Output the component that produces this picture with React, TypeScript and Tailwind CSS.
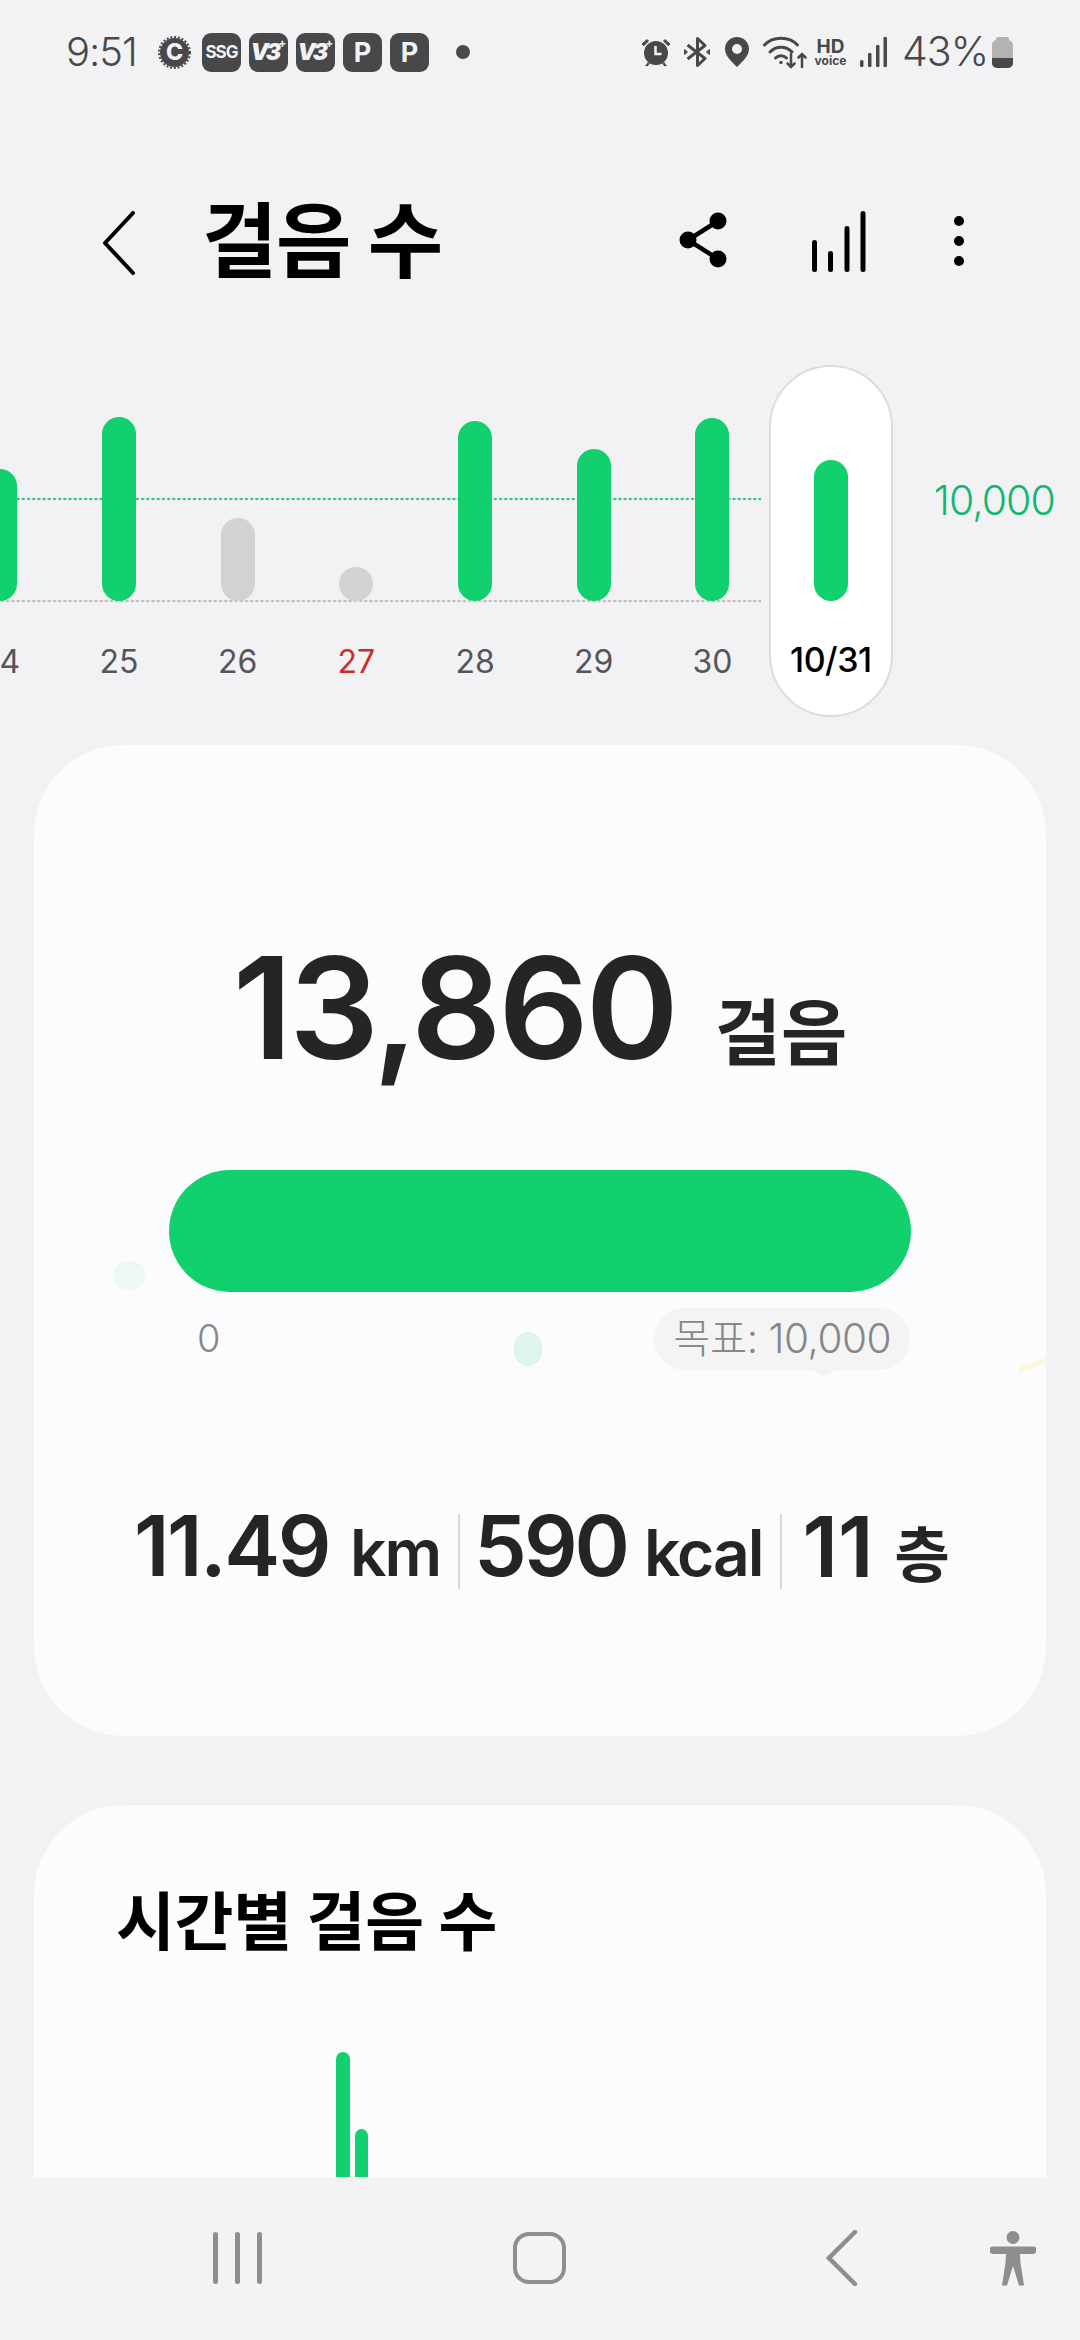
const days = [
  { label: "24", h: 132, color: "bg-[#12d06e]", text: "text-[#55555a]" },
  { label: "25", h: 184, color: "bg-[#12d06e]", text: "text-[#55555a]" },
  { label: "26", h: 83, color: "bg-[#d2d2d2]", text: "text-[#55555a]" },
  { label: "27", h: 34, color: "bg-[#d2d2d2]", text: "text-[#c9302c]" },
  { label: "28", h: 180, color: "bg-[#12d06e]", text: "text-[#55555a]" },
  { label: "29", h: 152, color: "bg-[#12d06e]", text: "text-[#55555a]" },
  { label: "30", h: 183, color: "bg-[#12d06e]", text: "text-[#55555a]" },
];

const Alarm = () => (
  <svg width="30" height="30" viewBox="0 0 30 30" fill="#48484a">
    <circle cx="15" cy="16" r="12" />
    <path d="M1 7 6 2.500 7.500 4 2.800 8.800ZM29 7 24 2.500 22.500 4 27.200 8.800Z" stroke="#48484a" strokeWidth="1" />
    <path d="M4 29l3-4 2 1.500-2.500 2.800ZM26 29l-3-4-2 1.500 2.500 2.800Z" />
    <path d="M14.500 9v8h6" fill="none" stroke="#f2f2f4" strokeWidth="2.500" />
  </svg>
);

const Bluetooth = () => (
  <svg width="26" height="32" viewBox="0 0 26 32" fill="none" stroke="#48484a" strokeWidth="3" strokeLinejoin="round">
    <path d="M3.500 9 21 22.500 13.500 29.500V2.500L21 9.500 3.500 23" />
    <path d="M0.500 13.500v5l3-2.500ZM25.500 13.500v5l-3-2.500Z" fill="#48484a" strokeWidth="1" />
  </svg>
);

const Pin = () => (
  <svg width="24" height="30" viewBox="0 0 24 30">
    <path
      fillRule="evenodd"
      fill="#48484a"
      d="M12 0C5.200 0 0 5.200 0 12c0 7 6.500 12.500 12 18 5.500-5.500 12-11 12-18C24 5.200 18.800 0 12 0Zm0 7a5 5 0 1 1 0 10 5 5 0 0 1 0-10Z"
    />
  </svg>
);

const Wifi = () => (
  <svg width="44" height="33" viewBox="0 0 44 33" fill="none" stroke="#48484a" strokeWidth="3" strokeLinecap="round">
    <path d="M1.500 9C10 0 26 0 34.500 9" />
    <path d="M7 16C13 9.500 23 9.500 29 16" />
    <path d="M12.500 22C15.500 19 20.500 19 23.500 22" />
    <circle cx="18" cy="26.500" r="1.700" fill="#48484a" stroke="none" />
    <path d="M28 18v13M24.500 27.500 28 31l3.500-3.500M39 31V18M35.500 21.500 39 18l3.500 3.500" strokeWidth="2.500" />
  </svg>
);

const Signal = () => (
  <svg width="27" height="30" viewBox="0 0 27 30" fill="#48484a">
    <rect x="0" y="23" width="3.500" height="7" rx="1.500" />
    <rect x="8" y="16" width="3.500" height="14" rx="1" />
    <rect x="16" y="8" width="3.500" height="22" rx="1" />
    <rect x="23.500" y="0" width="3.500" height="30" rx="1" />
  </svg>
);

const ShareIcon = () => (
  <svg width="48" height="56" viewBox="0 0 48 56" fill="#000">
    <path d="M39 9 9 28 39 47" fill="none" stroke="#000" strokeWidth="4.500" />
    <ellipse cx="39" cy="9" rx="8.500" ry="8.500" />
    <ellipse cx="9" cy="28" rx="8.500" ry="8.500" />
    <ellipse cx="39" cy="47" rx="8.500" ry="8.500" />
  </svg>
);

const ChartIcon = () => (
  <svg width="54" height="61" viewBox="0 0 54 61" fill="#000">
    <rect x="0" y="29" width="5" height="32" rx="2.500" />
    <rect x="16" y="40" width="5" height="21" rx="2.500" />
    <rect x="32.500" y="15" width="5" height="46" rx="2.500" />
    <rect x="48.500" y="0" width="5" height="61" rx="2.500" />
  </svg>
);

const Person = () => (
  <svg width="46" height="56" viewBox="0 0 46 56" fill="#8e8e90">
    <ellipse cx="23" cy="6.500" rx="6.500" ry="6.500" />
    <path d="M3 15.500h40a3 3 0 0 1 0 7.500H30l.5 9 3.500 22.500h-5L23 35l-6 19.500h-5L15.500 32l.5-9H3a3 3 0 0 1 0-7.500Z" />
  </svg>
);

function Badge({ children }: { children: React.ReactNode }) {
  return (
    <div className="w-[39px] h-[39px] rounded-[9px] bg-[#48484a] flex items-center justify-center text-[#f2f2f4] font-bold leading-none">
      {children}
    </div>
  );
}

function V3Badge() {
  return (
    <Badge>
      <span className="text-[23px] italic font-black tracking-[-3px]">V3</span>
      <span className="text-[12px] -mt-[18px]">+</span>
    </Badge>
  );
}

function Stat({ value, unit, valueClass, unitClass }: { value: string; unit: string; valueClass: string; unitClass: string }) {
  return (
    <div className="flex items-baseline">
      <span className={`text-[84px] leading-[90px] font-semibold ${valueClass}`}>{value}</span>
      <span className={unitClass}>{unit}</span>
    </div>
  );
}

export default function App() {
  return (
    <div className="w-[1080px] h-[2340px] overflow-hidden flex flex-col bg-[#f2f2f4] font-['Inter','Noto_Sans_CJK_KR',sans-serif]">
      <div className="flex-1 min-h-0 overflow-hidden">
        {/* status bar */}
        <div className="h-[104px] flex items-center pl-[66px] text-[#48484a]">
          <span className="text-[40px] font-light tracking-[-1px] w-[92px]">9:51</span>
          <svg width="33" height="35" viewBox="0 0 33 35" className="mr-[11px]">
            <circle cx="16.500" cy="17.500" r="14.500" fill="#48484a" />
            <circle cx="16.500" cy="17.500" r="15.500" fill="none" stroke="#48484a" strokeWidth="2" strokeDasharray="2 1.800" />
            <text x="16.500" y="25" textAnchor="middle" fontSize="23" fontWeight="800" fill="#f2f2f4">C</text>
          </svg>
          <div className="flex gap-[8px]">
            <Badge><span className="text-[17px] tracking-[-1px]">SSG</span></Badge>
            <V3Badge />
            <V3Badge />
            <Badge><span className="text-[27px]">P</span></Badge>
            <Badge><span className="text-[27px]">P</span></Badge>
          </div>
          <div className="w-[14px] h-[14px] rounded-full bg-[#48484a] ml-[27px] mr-[171px]" />
          <Alarm />
          <div className="ml-[13px]"><Bluetooth /></div>
          <div className="ml-[15px]"><Pin /></div>
          <div className="ml-[14px]"><Wifi /></div>
          <div className="ml-[7px] flex flex-col items-center w-[33px] font-bold">
            <span className="text-[19px] leading-[17px]">HD</span>
            <span className="text-[12px] leading-[11px]">voice</span>
          </div>
          <div className="ml-[13px]"><Signal /></div>
          <span className="ml-[15px] text-[41px] font-light tracking-[-1px] w-[90px]">43%</span>
          <div className="w-[21px] h-[31px] flex flex-col items-center">
            <div className="w-[13px] h-[3px] rounded-t-[2px] bg-[#b3b3b5]" />
            <div className="w-[21px] h-[28px] rounded-[5px] bg-[#b3b3b5] overflow-hidden flex flex-col justify-end">
              <div className="h-[10px] bg-[#48484a]" />
            </div>
          </div>
        </div>

        {/* header */}
        <div className="h-[261px] flex items-start">
          <svg width="34" height="64" viewBox="0 0 34 64" fill="none" stroke="#000" strokeWidth="4" strokeLinecap="round" className="ml-[102px] mt-[107px]">
            <path d="M31 2 3 32 31 62" strokeLinejoin="round" />
          </svg>
          <h1 className="ml-[66px] mt-[88px] w-[241px] text-[82px] leading-[100px] font-bold text-black tracking-[-1.5px] whitespace-nowrap">걸음 수</h1>
          <div className="ml-[236px] mt-[108px]"><ShareIcon /></div>
          <div className="ml-[85px] mt-[107px]"><ChartIcon /></div>
          <div className="ml-[88px] mt-[112px] flex flex-col gap-[10px]">
            <div className="w-[10px] h-[10px] rounded-full bg-black" />
            <div className="w-[10px] h-[10px] rounded-full bg-black" />
            <div className="w-[10px] h-[10px] rounded-full bg-black" />
          </div>
        </div>

        {/* week chart */}
        <div className="relative h-[352px] flex -ml-[59px]">
          <div className="absolute left-[59px] w-[761px] top-[132px] h-[4px] bg-[radial-gradient(circle,#2cc67e_1.3px,transparent_1.6px)] bg-[length:5.2px_4px]" />
          <div className="absolute left-[59px] w-[761px] top-[234px] h-[4px] bg-[radial-gradient(circle,#bcbcbe_1.3px,transparent_1.6px)] bg-[length:5.2px_4px]" />
          {days.map((d) => (
            <div key={d.label} className="relative w-[118.7px] shrink-0 flex flex-col items-center">
              <div className="h-[236px] flex items-end">
                <div className={`w-[34px] rounded-full ${d.color}`} style={{ height: d.h }} />
              </div>
              <span className={`mt-[41px] text-[32px] leading-[40px] ${d.text}`}>{d.label}</span>
            </div>
          ))}
          <div className="relative w-[124px] shrink-0 -ml-[3px] flex flex-col items-center rounded-full bg-white border-2 border-[#dcdcdc]">
            <div className="h-[234px] flex items-end">
              <div className="w-[34px] h-[141px] rounded-full bg-[#12d06e]" />
            </div>
            <span className="mt-[39px] text-[34px] leading-[40px] font-medium text-black tracking-[-0.5px]">10/31</span>
          </div>
          <span className="ml-[41px] mt-[111px] h-[48px] text-[41px] leading-[48px] font-light text-[#0fb86c] tracking-[-1px]">10,000</span>
        </div>

        {/* summary card */}
        <div className="relative mx-[34px] mt-[28px] h-[991px] rounded-[90px] bg-[#fcfcfe] overflow-hidden text-[#252528]">
          <div className="absolute left-[79px] top-[516px] w-[33px] h-[29px] rounded-full bg-[#eef8f6]" />
          <div className="absolute left-[480px] top-[587px] w-[28px] h-[34px] rounded-full bg-[#dff4ea]" />
          <div className="absolute left-[779px] top-[605px] w-[23px] h-[25px] rounded-full bg-[#eef4f8]" />
          <div className="absolute left-[983px] top-[617px] w-[34px] h-[5px] -rotate-[20deg] rounded-full bg-[#fdf6dc]" />

          <div className="relative pt-[193px] flex justify-center items-baseline">
            <span className="text-[141px] leading-[140px] font-semibold tracking-[-3px]">13,860</span>
            <span className="ml-[39px] text-[72px] leading-[70px] font-bold">걸음</span>
          </div>

          <div className="relative mx-[135px] mt-[92px]">
            <div className="h-[122px] rounded-full bg-[#12d06e]" />
            <div className="mt-[16px] flex justify-between pl-[28px]">
              <span className="mt-[10px] text-[38px] leading-[40px] font-light text-[#87878a]">0</span>
              <span className="h-[62px] px-[19px] rounded-full bg-[#f4f4f5] flex items-center text-[40.500px] font-light text-[#87878a] tracking-[-0.5px] mr-px">목표: 10,000</span>
            </div>
          </div>

          <div className="relative mt-[131px] pl-[100px] flex items-center">
            <Stat value="11.49" unit="km" valueClass="tracking-[-2.500px]" unitClass="ml-[21px] text-[64px] font-semibold tracking-[-2px]" />
            <div className="w-[2px] h-[75px] bg-[#d8d8da] ml-[18px] mr-[14px]" />
            <Stat value="590" unit="kcal" valueClass="tracking-[-3px]" unitClass="ml-[17px] text-[64px] font-semibold tracking-[-2px]" />
            <div className="w-[2px] h-[75px] bg-[#d8d8da] ml-[18px] mr-[20px]" />
            <Stat value="11" unit="층" valueClass="tracking-[0px]" unitClass="ml-[21px] text-[60px] font-bold" />
          </div>
        </div>

        {/* hourly card */}
        <div className="mx-[34px] mt-[69px] h-[372px] rounded-t-[90px] bg-[#fcfcfe] flex flex-col overflow-hidden">
          <h2 className="pl-[82px] pt-[72px] text-[64px] leading-[90px] font-bold text-black tracking-[-0.300px]">시간별 걸음 수</h2>
          <div className="mt-auto pl-[302px] flex items-end gap-[5px]">
            <div className="w-[14px] h-[125px] rounded-t-full bg-[#12d06e]" />
            <div className="w-[13px] h-[48px] rounded-t-full bg-[#12d06e]" />
          </div>
        </div>
      </div>

      {/* nav bar */}
      <div className="h-[163px] shrink-0 bg-[#f3f3f4] flex items-start pt-[55px] text-[#8e8e90]">
        <div className="ml-[213px] flex gap-[17px] h-[52px]">
          <div className="w-[5px] rounded-full bg-[#8e8e90]" />
          <div className="w-[5px] rounded-full bg-[#8e8e90]" />
          <div className="w-[5px] rounded-full bg-[#8e8e90]" />
        </div>
        <div className="ml-[251px] w-[53px] h-[52px] rounded-[16px] border-[4px] border-[#8e8e90]" />
        <svg width="32" height="56" viewBox="0 0 32 56" fill="none" stroke="#8e8e90" strokeWidth="4.500" strokeLinecap="round" className="ml-[260px] -mt-[2px]">
          <path d="M29 2 3 28 29 54" />
        </svg>
        <div className="ml-[132px] -mt-[1px]"><Person /></div>
      </div>
    </div>
  );
}
